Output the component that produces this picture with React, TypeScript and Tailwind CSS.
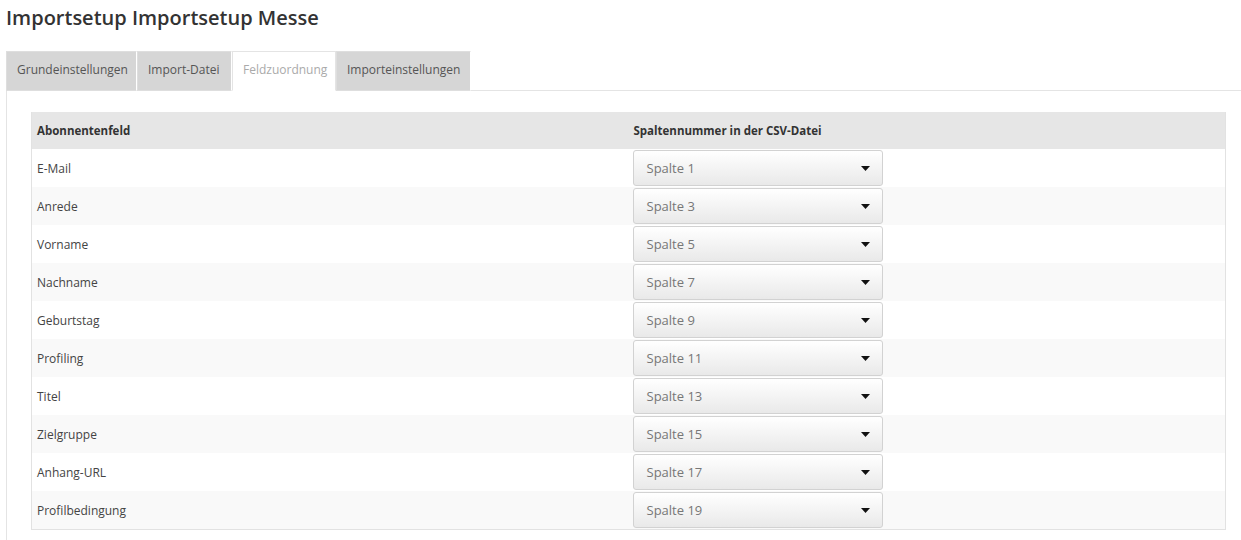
import { useState } from 'react';

const tabs = [
  { label: 'Grundeinstellungen', width: 'w-[131px]' },
  { label: 'Import-Datei', width: 'w-[95px]' },
  { label: 'Feldzuordnung', width: 'w-[104px]' },
  { label: 'Importeinstellungen', width: 'w-[135px]' },
];

const fields = [
  { label: 'E-Mail', column: 1 },
  { label: 'Anrede', column: 3 },
  { label: 'Vorname', column: 5 },
  { label: 'Nachname', column: 7 },
  { label: 'Geburtstag', column: 9 },
  { label: 'Profiling', column: 11 },
  { label: 'Titel', column: 13 },
  { label: 'Zielgruppe', column: 15 },
  { label: 'Anhang-URL', column: 17 },
  { label: 'Profilbedingung', column: 19 },
];

const ColumnSelect = ({ value }: { value: number }) => (
  <div className="flex items-center justify-between w-[250px] h-[36px] pl-[13px] pr-[12px] pt-px border border-[#d2d2d2] rounded-[3px] bg-gradient-to-b from-white to-[#e9e9e9] text-[13px] text-[#777] cursor-pointer">
    <span>Spalte {value}</span>
    <svg width="9" height="5" viewBox="0 0 9 5">
      <path d="M0 0 H9 L4.5 5 Z" fill="#111" />
    </svg>
  </div>
);

const App = () => {
  const [activeTab, setActiveTab] = useState(2);

  return (
    <div className="min-h-screen bg-white font-['Open_Sans',sans-serif] text-[#444]">
      <h1 className="pl-[6px] pt-[5px] text-[20px] leading-[26px] font-semibold text-[#333]">
        Importsetup Importsetup Messe
      </h1>

      <div className="mt-[20px] ml-[6px] flex border-b border-[#e4e4e4]">
        {tabs.map((tab, i) => (
          <button
            key={tab.label}
            onClick={() => setActiveTab(i)}
            className={`${tab.width} h-[40px] -mb-px pl-[10px] pb-[2px] text-left text-[12px] border ${
              activeTab === i
                ? 'bg-white text-[#aaa] border-[#e4e4e4] border-b-white'
                : 'bg-[#d6d6d6] text-[#555] border-[#dedede] border-r-white'
            }`}
          >
            {tab.label}
          </button>
        ))}
      </div>

      <div className="ml-[6px] border-l border-[#e4e4e4] pl-[24px] pr-[15px] pt-[21px] pb-[20px]">
        <table className="w-full border-collapse border-x border-b border-[#e2e2e2] text-[12px]">
          <thead>
            <tr className="bg-[#e6e6e6] h-[37px]">
              <th className="w-1/2 text-left font-bold text-[#333] px-[5px] text-[11.5px]">Abonnentenfeld</th>
              <th className="text-left font-bold text-[#333] px-[5px] text-[11.5px]">Spaltennummer in der CSV-Datei</th>
            </tr>
          </thead>
          <tbody>
            {fields.map((field, i) => (
              <tr key={field.label} className={`h-[38px] ${i % 2 === 0 ? 'bg-white' : 'bg-[#f9f9f9]'}`}>
                <td className="px-[5px] pt-[2px] text-[#444]">{field.label}</td>
                <td className="px-[4px] py-px">
                  <ColumnSelect value={field.column} />
                </td>
              </tr>
            ))}
          </tbody>
        </table>
      </div>
    </div>
  );
};

export default App;
